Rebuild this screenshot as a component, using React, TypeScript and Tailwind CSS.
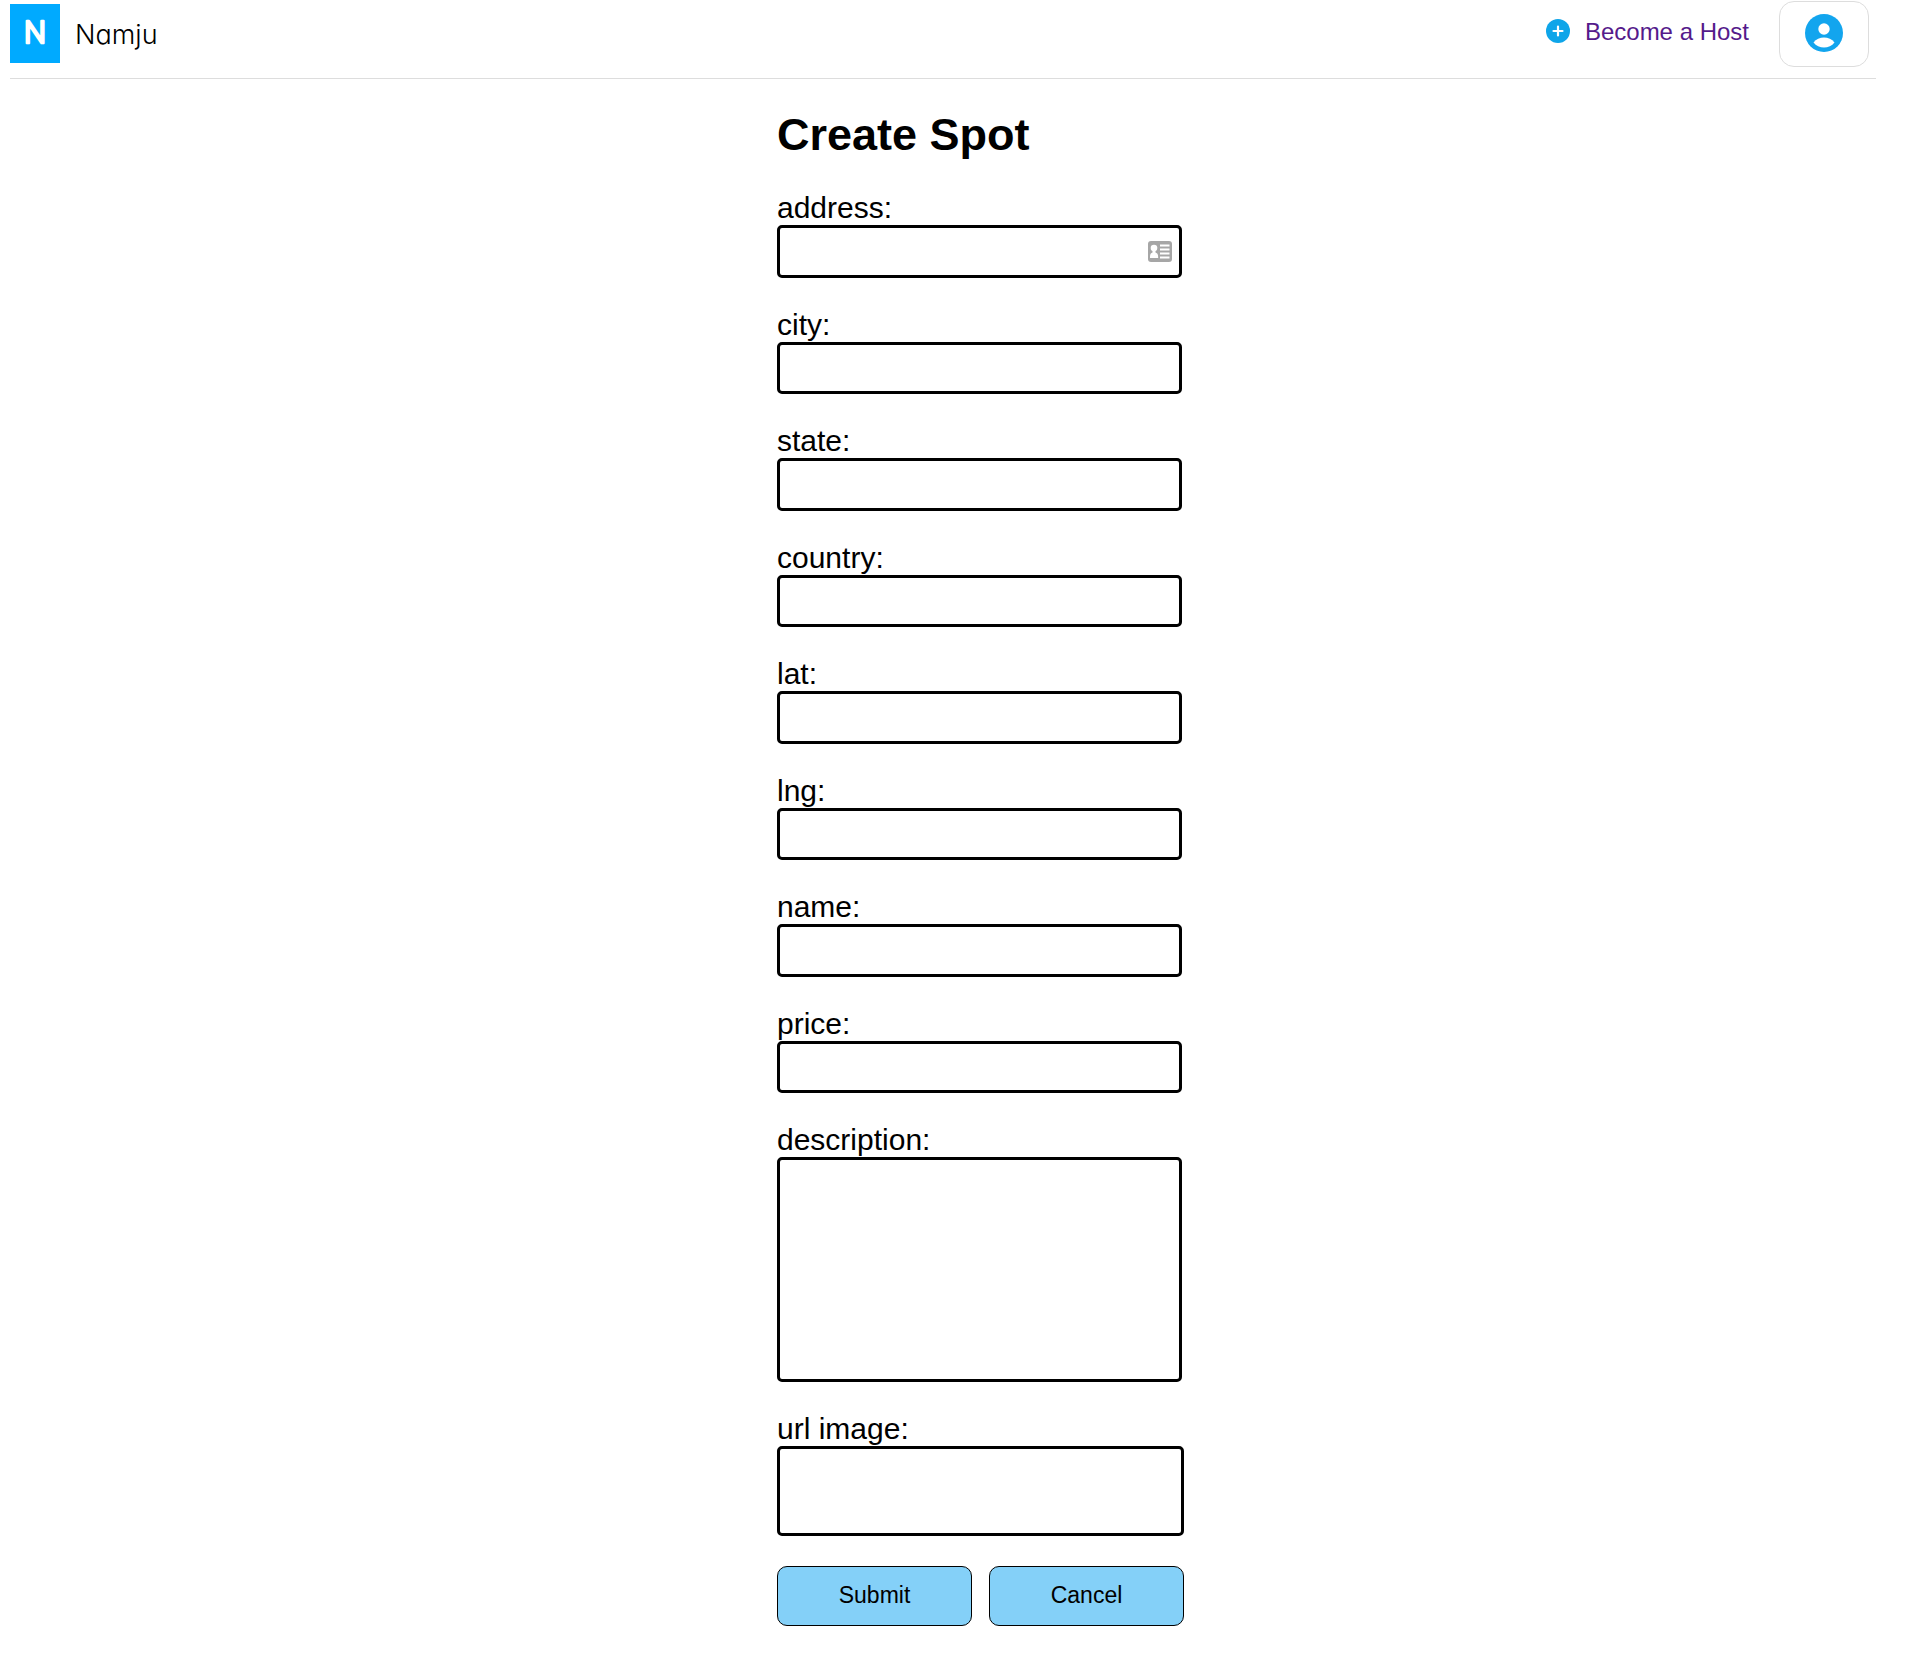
import React from "react";

const fields = ["address", "city", "state", "country", "lat", "lng", "name", "price"];

const box = "block rounded-[5px] border-3 border-black bg-white px-2 text-2xl outline-none";
const label = "block text-[30px] leading-[35px]";
const button =
  "h-[60px] flex-1 cursor-pointer rounded-[10px] border border-black bg-[#84d0f8] pb-[2px] text-[23px] text-black";

function Logo() {
  return (
    <a href="#home" className="flex items-center gap-[15px]">
      <svg width="50" height="59" viewBox="0 0 50 59" role="img" aria-label="Namju logo">
        <rect width="50" height="59" fill="#00aaff" />
        <text
          x="25"
          y="39"
          textAnchor="middle"
          fontFamily="Roboto, sans-serif"
          fontWeight="300"
          fontSize="31"
          fill="#fff"
          stroke="#fff"
          strokeWidth="2.500"
          strokeLinejoin="round"
        >
          N
        </text>
      </svg>
      <span className="pt-[2px] font-[Inter,sans-serif] text-[27px] leading-8 font-light text-black [font-feature-settings:'cv11']">
        Namju
      </span>
    </a>
  );
}

function PlusIcon() {
  return (
    <svg width="24" height="24" viewBox="0 0 24 24" aria-hidden="true">
      <circle cx="12" cy="12" r="12" fill="#0ea5e9" />
      <path d="M12 7.500v9M7.500 12h9" stroke="#fff" strokeWidth="2.200" strokeLinecap="round" />
    </svg>
  );
}

function UserIcon() {
  return (
    <svg width="38" height="38" viewBox="0 0 38 38" aria-hidden="true">
      <circle cx="19" cy="19" r="19" fill="#12a5ee" />
      <circle cx="19" cy="15" r="5.7" fill="#fff" />
      <path d="M8.5 28.5C11 25 15 23.5 19 23.5s8 1.500 10.500 5C27 31.800 23 33.500 19 33.500S11 31.800 8.500 28.500Z" fill="#fff" />
    </svg>
  );
}

function ContactCardIcon() {
  return (
    <svg
      width="24"
      height="21"
      viewBox="0 0 24 21"
      aria-hidden="true"
      className="pointer-events-none absolute top-4 right-[10px]"
    >
      <rect width="24" height="21" rx="3" fill="#a6a6a6" />
      <circle cx="6" cy="7" r="3.300" fill="#fff" />
      <path d="M4.500 8h3v3.500c1.800.500 2.700 1.500 2.700 5.500H2c0-4 .700-5 2.500-5.500Z" fill="#fff" />
      <path d="M12 4.500h9.500M12 8.500h9.500M12 12.500h9.500M12 16.500h9.500" stroke="#fff" strokeWidth="2" />
    </svg>
  );
}

export default function App() {
  return (
    <div className="bg-white font-['Liberation_Sans',Arial,sans-serif] text-black">
      <header className="mr-[47px] ml-[10px] flex h-[79px] items-start justify-between border-b border-[#dddddd]">
        <div className="pt-1">
          <Logo />
        </div>
        <nav className="flex items-start gap-[30px] pt-px pr-[7px]">
          <a href="#host" className="flex items-start gap-[15px] pt-4 text-2xl leading-[30px] text-[#551a8b]">
            <span className="pt-[2px]">
              <PlusIcon />
            </span>
            Become a Host
          </a>
          <button
            type="button"
            aria-label="Account menu"
            className="flex h-[66px] w-[90px] cursor-pointer items-start justify-center rounded-[15px] border border-[#dddddd] bg-white pt-3"
          >
            <UserIcon />
          </button>
        </nav>
      </header>

      <main className="flex justify-center pl-[38px]">
        <form className="w-[407px] pt-[30px] pb-[31px]" onSubmit={(e) => e.preventDefault()}>
          <h1 className="mb-[29px] text-[45px] leading-[52px] font-bold">Create Spot</h1>
          <div>
            {fields.map((name) => (
              <div key={name} className="group mb-[29px]">
                <label htmlFor={name} className={label}>
                  {name}:
                </label>
                <div className="relative w-[405px]">
                  <input id={name} name={name} type="text" className={`${box} h-[53px] w-full group-even:h-[52px]`} />
                  {name === "address" && <ContactCardIcon />}
                </div>
              </div>
            ))}
          </div>
          <div className="mb-[29px]">
            <label htmlFor="description" className={label}>
              description:
            </label>
            <textarea id="description" name="description" className={`${box} h-[225px] w-[405px] resize-none`} />
          </div>
          <div className="mb-[30px]">
            <label htmlFor="url-image" className={label}>
              url image:
            </label>
            <input id="url-image" name="url-image" type="text" className={`${box} h-[90px] w-full`} />
          </div>
          <div className="flex gap-[17px]">
            <button type="submit" className={button}>
              Submit
            </button>
            <button type="button" className={button}>
              Cancel
            </button>
          </div>
        </form>
      </main>
    </div>
  );
}
